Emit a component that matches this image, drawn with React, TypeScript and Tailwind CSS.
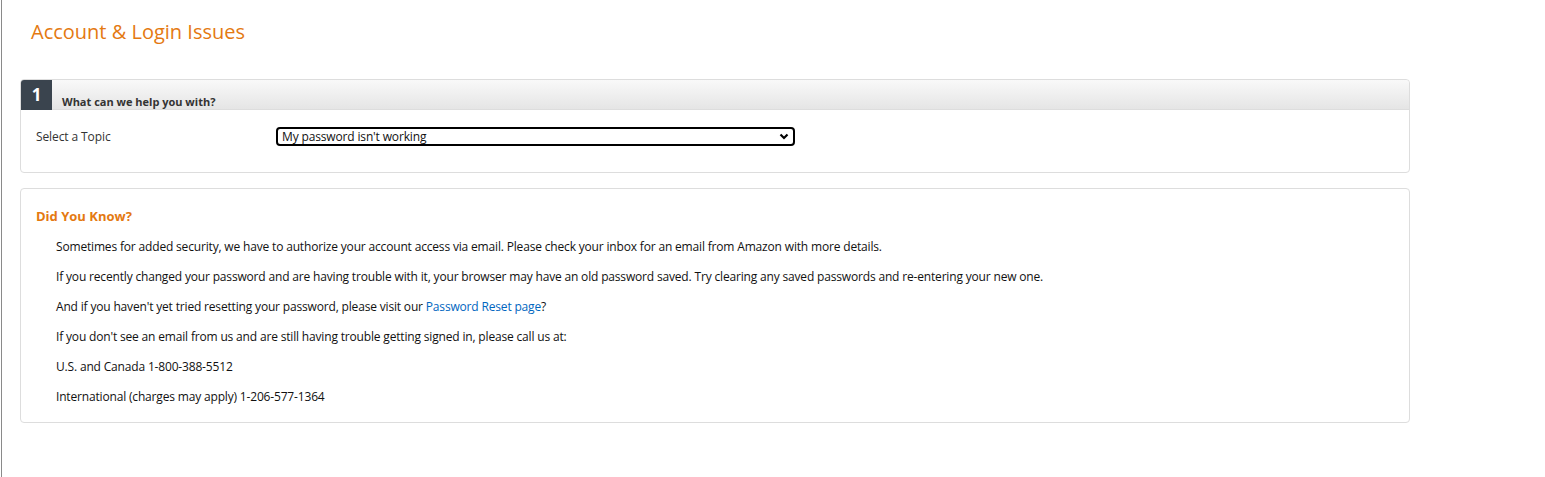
import React from "react";

const tips = [
  "Sometimes for added security, we have to authorize your account access via email. Please check your inbox for an email from Amazon with more details.",
  "If you recently changed your password and are having trouble with it, your browser may have an old password saved. Try clearing any saved passwords and re-entering your new one.",
];

export default function App() {
  return (
    <div className="min-h-[477px] w-[1545px] bg-white text-[#111] ml-px border-l border-[#8a8a8a] font-['Open_Sans',sans-serif]">
      <div className="w-[1390px] ml-[18px] pt-[19px]">
        <h1 className="text-[20px] leading-[26px] text-[#e47911] pl-[11px]">
          Account &amp; Login Issues
        </h1>

        <div className="mt-[34px] border border-[#dddddd] rounded-[4px]">
          <div className="flex h-[30px] bg-gradient-to-b from-[#f9f9f9] to-[#e5e5e5] border-b border-[#dddddd] rounded-t-[4px]">
            <div className="w-[31px] h-[30px] bg-[#3a444e] text-white font-bold text-[17px] leading-[30px] flex items-center justify-center rounded-tl-[3px]">
              1
            </div>
            <div className="pl-[10px] pt-[15px] text-[11px] font-bold text-[#333] leading-[14px]">
              What can we help you with?
            </div>
          </div>
          <div className="flex items-start h-[62px] pt-[17px] pl-[15px]">
            <label className="w-[240px] pt-[2px] text-[12px] leading-[16px] text-[#333] tracking-[-0.1px]">
              Select a Topic
            </label>
            <div className="relative w-[519px] h-[19px]">
              <select
                defaultValue="pw"
                className="block appearance-none w-full h-[19px] py-0 border-2 border-black rounded-[4px] text-[12px] leading-[15px] pl-[4px] bg-white text-[#111] tracking-[-0.15px]"
              >
                <option value="pw">My password isn't working</option>
              </select>
              <svg
                className="absolute right-[6px] top-[6px] pointer-events-none"
                width="10"
                height="8"
                viewBox="0 0 10 8"
              >
                <path d="M1.5 1.5 L5 5 L8.5 1.5" stroke="#000" strokeWidth="2.2" fill="none" />
              </svg>
            </div>
          </div>
        </div>

        <div className="mt-[15px] border border-[#dddddd] rounded-[4px] pl-[15px] pt-[16px] pb-[17px]">
          <h2 className="text-[13px] font-bold text-[#e47911] leading-[22px]">Did You Know?</h2>
          <div className="pl-[20px] text-[12px] leading-[16px] text-[#111] tracking-[-0.17px]">
            {tips.map((t) => (
              <p key={t} className="mt-[14px] first:mt-[12px]">{t}</p>
            ))}
            <p className="mt-[14px]">
              And if you haven't yet tried resetting your password, please visit our{" "}
              <a className="text-[#0066c0]" href="#">Password Reset page</a>?
            </p>
            <p className="mt-[14px]">
              If you don't see an email from us and are still having trouble getting signed in, please call us at:
            </p>
            <p className="mt-[14px]">U.S. and Canada 1-800-388-5512</p>
            <p className="mt-[14px]">International (charges may apply) 1-206-577-1364</p>
          </div>
        </div>
      </div>
    </div>
  );
}
